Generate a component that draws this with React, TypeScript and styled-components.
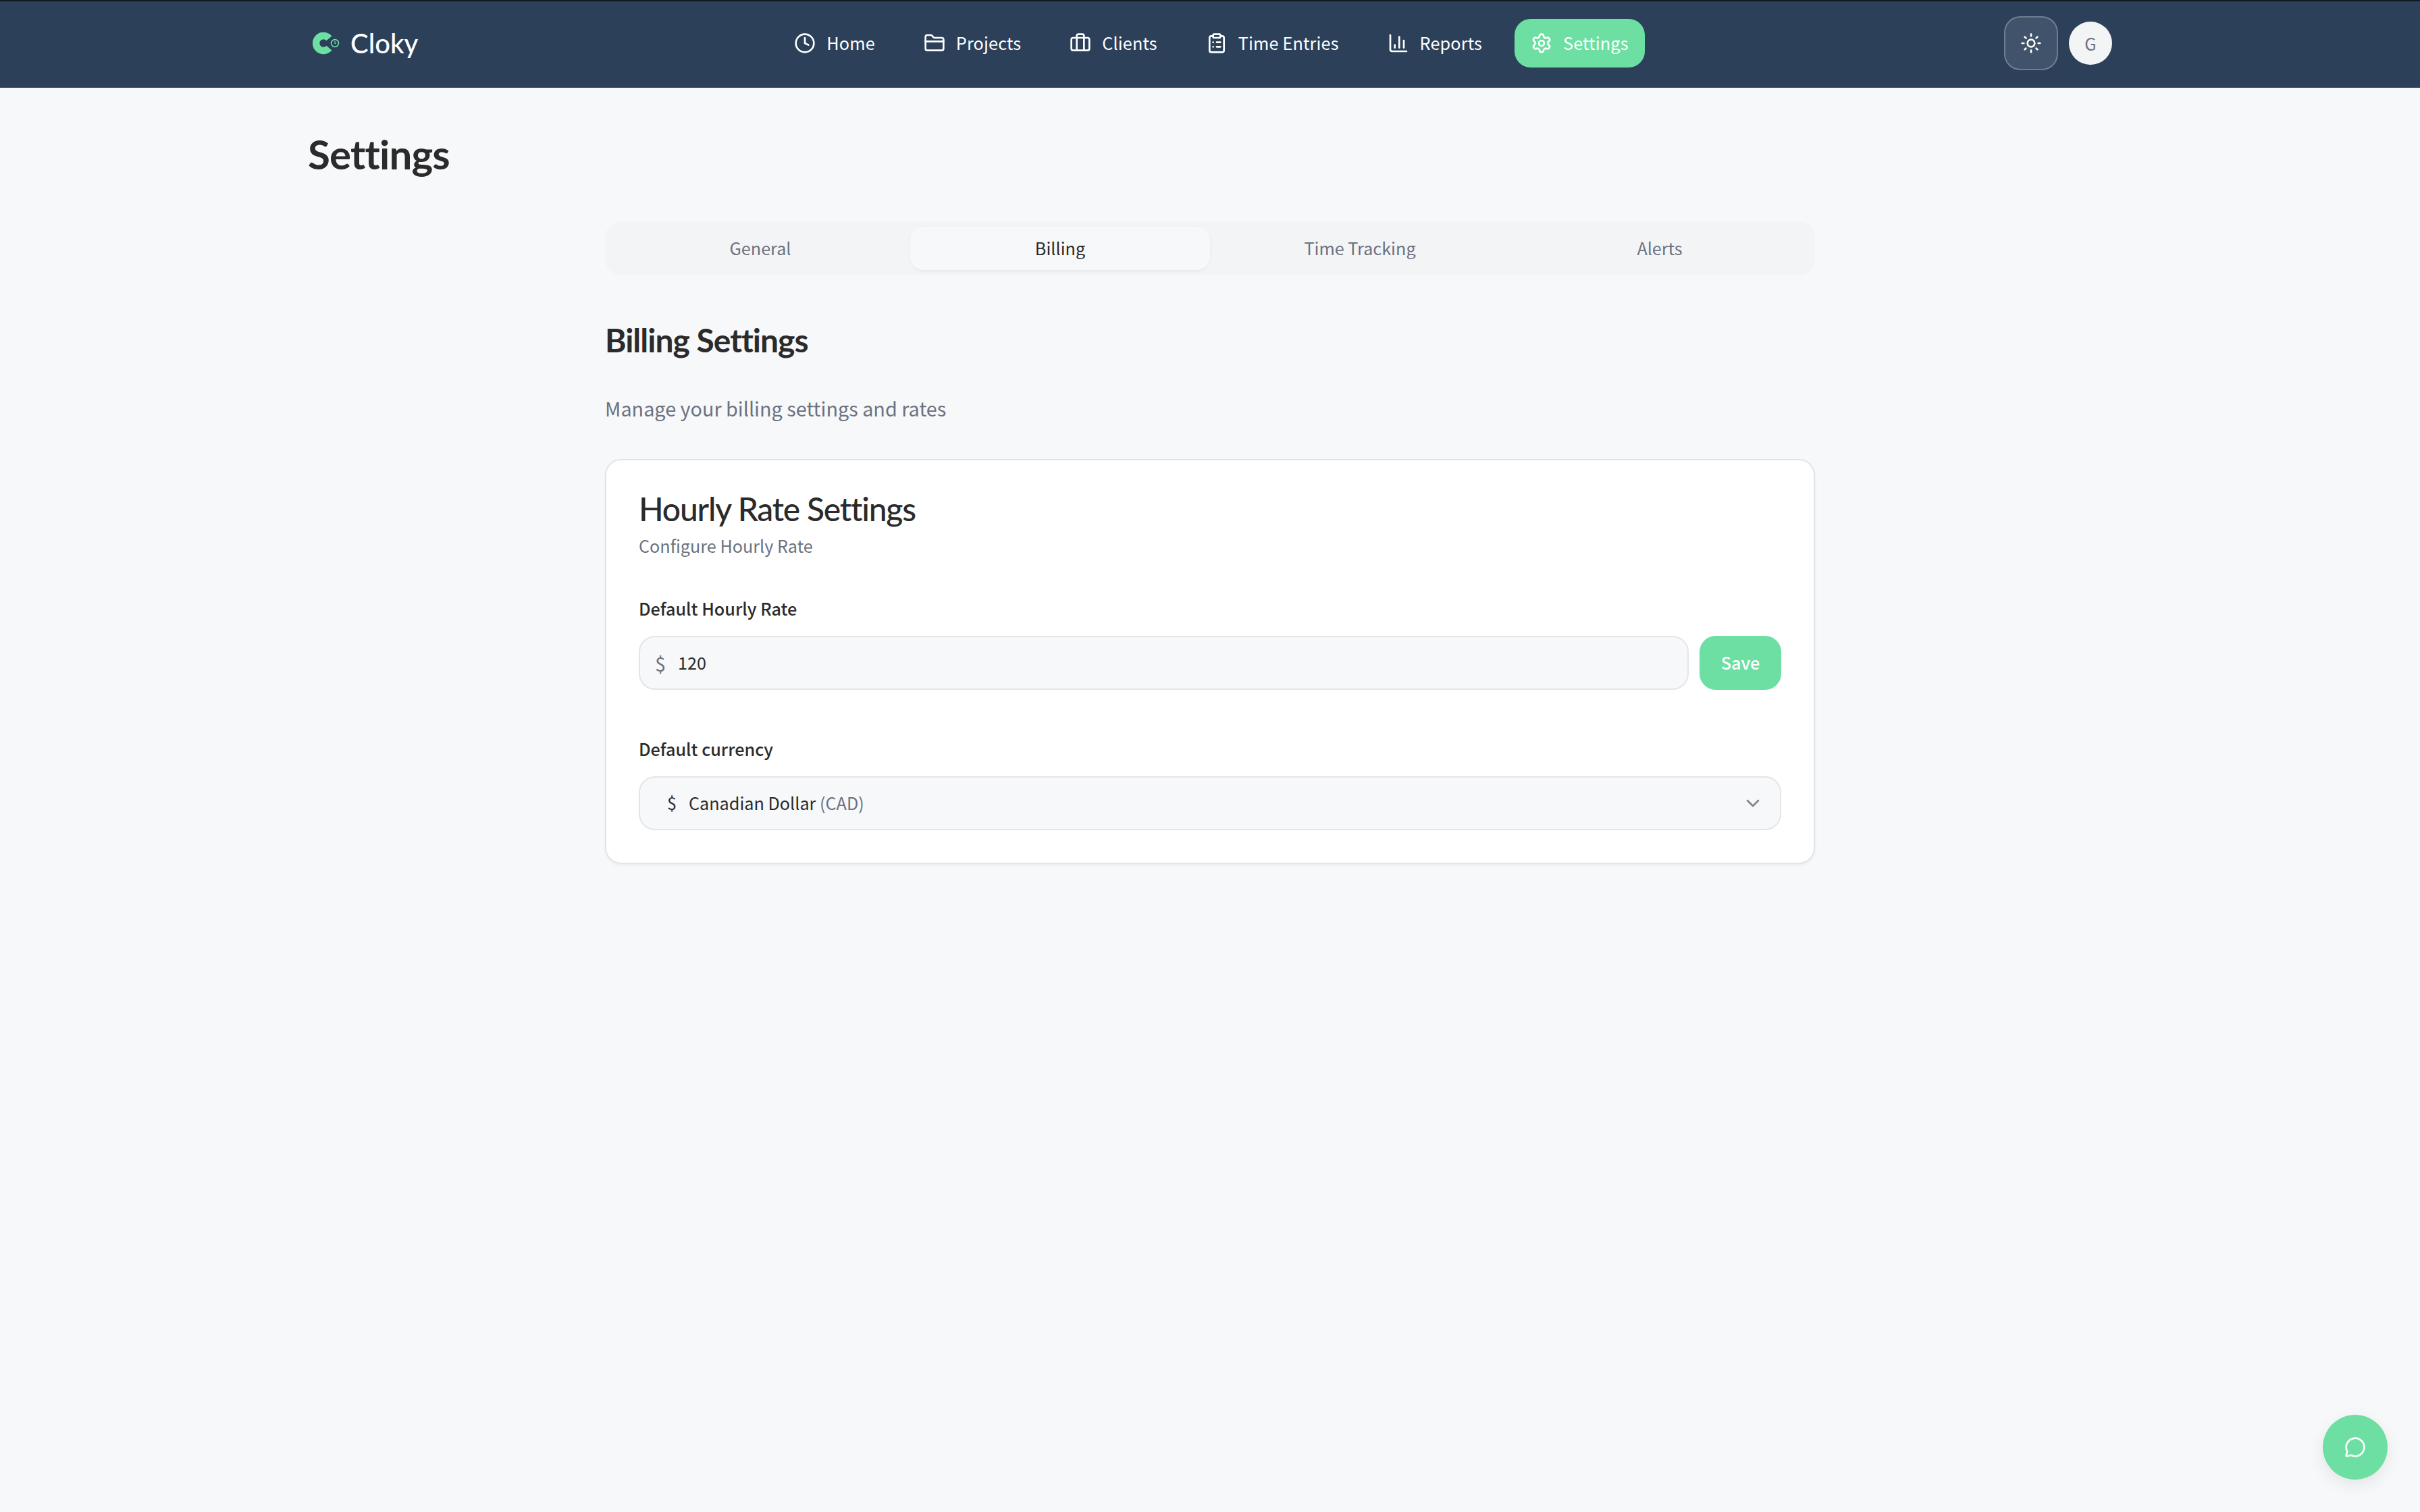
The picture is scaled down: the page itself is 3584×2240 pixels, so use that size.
import styled, { createGlobalStyle } from "styled-components"
import {
  Briefcase,
  ChartColumn,
  ChevronDown,
  ClipboardList,
  Clock,
  FolderClosed,
  MessageCircle,
  Settings,
  Sun,
} from "lucide-react"
import type { LucideIcon } from "lucide-react"

const BODY_FONT = `"Noto Sans CJK JP", "Noto Sans", sans-serif`
const HEAD_FONT = `Lato, "Open Sans", sans-serif`
const GREEN = "#6ddfa2"
const PAGE_BG = "#f7f8fa"

const GlobalStyle = createGlobalStyle`
  html, body {
    margin: 0;
    padding: 0;
    background: ${PAGE_BG};
  }
  * {
    box-sizing: border-box;
  }
`

const NAV_ITEMS: { label: string; icon: LucideIcon; active?: boolean }[] = [
  { label: "Home", icon: Clock },
  { label: "Projects", icon: FolderClosed },
  { label: "Clients", icon: Briefcase },
  { label: "Time Entries", icon: ClipboardList },
  { label: "Reports", icon: ChartColumn },
  { label: "Settings", icon: Settings, active: true },
]

const TABS = ["General", "Billing", "Time Tracking", "Alerts"]

function Logo() {
  return (
    <svg width="40" height="36" viewBox="0 0 40 36">
      <path
        d="M24.4 10.9A11 11 0 1 0 24.4 25.1"
        fill="none"
        stroke={GREEN}
        strokeWidth="10.5"
      />
      <circle cx="33" cy="18" r="5.4" fill="none" stroke={GREEN} strokeWidth="1.6" />
      <path d="M33 15v3.2l1.8 1" fill="none" stroke={GREEN} strokeWidth="1.2" />
    </svg>
  )
}

export default function App() {
  return (
    <Page>
      <GlobalStyle />
      <Header>
        <HeaderInner>
          <Brand>
            <Logo />
            <BrandName>Cloky</BrandName>
          </Brand>
          <Nav>
            {NAV_ITEMS.map(({ label, icon: Icon, active }) => (
              <NavItem key={label} $active={active}>
                <Icon size={32} strokeWidth={2} />
                <RaisedText>{label}</RaisedText>
              </NavItem>
            ))}
          </Nav>
          <HeaderActions>
            <ThemeButton>
              <Sun size={32} strokeWidth={2} />
            </ThemeButton>
            <Avatar>G</Avatar>
          </HeaderActions>
        </HeaderInner>
      </Header>

      <Main>
        <PageTitle>Settings</PageTitle>
        <Content>
          <Tabs>
            {TABS.map((tab) => (
              <Tab key={tab} $active={tab === "Billing"}>
                <RaisedText>{tab}</RaisedText>
              </Tab>
            ))}
          </Tabs>
          <SectionTitle>Billing Settings</SectionTitle>
          <SectionText>Manage your billing settings and rates</SectionText>
          <Card>
            <CardTitle>Hourly Rate Settings</CardTitle>
            <CardText>Configure Hourly Rate</CardText>
            <RateField>
              <Label>Default Hourly Rate</Label>
              <FieldRow>
                <RateInput>
                  <Dollar>$</Dollar>
                  <RaisedText>120</RaisedText>
                </RateInput>
                <SaveButton>
                  <RaisedText>Save</RaisedText>
                </SaveButton>
              </FieldRow>
            </RateField>
            <CurrencyField>
              <Label>Default currency</Label>
              <Select>
                <SelectValue>
                  <RaisedText>$</RaisedText>
                  <RaisedText>
                    Canadian Dollar <Code>(CAD)</Code>
                  </RaisedText>
                </SelectValue>
                <ChevronDown size={32} strokeWidth={2} color="#858585" />
              </Select>
            </CurrencyField>
          </Card>
        </Content>
      </Main>

      <ChatButton>
        <MessageCircle size={32} strokeWidth={2} />
      </ChatButton>
    </Page>
  )
}

const Page = styled.div`
  min-height: 2240px;
  background: ${PAGE_BG};
  font-family: ${BODY_FONT};
  color: #2b2b2b;
`
const Header = styled.header`
  height: 130px;
  background: #2c405a;
  box-shadow: inset 0 2px 0 #111820;
`
const HeaderInner = styled.div`
  max-width: 2736px;
  height: 128px;
  margin: 0 auto;
  padding: 0 32px;
  display: grid;
  grid-template-columns: 1fr auto 1fr;
  align-items: center;
`
const Brand = styled.div`
  display: flex;
  align-items: center;
  gap: 16px;
  padding-left: 7px;
`
const BrandName = styled.span`
  font-family: ${HEAD_FONT};
  font-size: 40px;
  font-weight: 500;
  color: #ffffff;
`
const Nav = styled.nav`
  display: flex;
  align-items: center;
  gap: 24px;
  padding-left: 4px;
`
const RaisedText = styled.span`
  display: block;
  padding-bottom: 3px;
`
const NavItem = styled.a<{ $active?: boolean }>`
  height: 72px;
  padding: 0 24px;
  display: flex;
  align-items: center;
  gap: 16px;
  border-radius: 24px;
  font-size: 25.2px;
  font-weight: 400;
  letter-spacing: 0.15px;
  color: #ffffff;
  background: ${(p) => (p.$active ? GREEN : "transparent")};
`
const HeaderActions = styled.div`
  display: flex;
  justify-content: flex-end;
  align-items: center;
  gap: 16px;
`
const ThemeButton = styled.button`
  width: 80px;
  height: 80px;
  display: flex;
  align-items: center;
  justify-content: center;
  padding: 0;
  border: 2px solid rgba(255, 255, 255, 0.25);
  border-radius: 24px;
  background: rgba(255, 255, 255, 0.1);
  color: #ffffff;
`
const Avatar = styled.div`
  width: 64px;
  height: 64px;
  display: flex;
  align-items: center;
  justify-content: center;
  border-radius: 50%;
  background: #f3f4f6;
  color: #6b7280;
  font-size: 25.2px;
`
const Main = styled.main`
  max-width: 2736px;
  margin: 0 auto;
  padding: 62px 32px 0;
`
const PageTitle = styled.h1`
  margin: 0;
  font-family: ${HEAD_FONT};
  font-size: 60px;
  line-height: 72px;
  font-weight: 700;
  letter-spacing: -0.8px;
  color: #2b2b2b;
`
const Content = styled.div`
  width: 1792px;
  margin: 64px auto 0;
`
const Tabs = styled.div`
  height: 80px;
  padding: 8px;
  display: grid;
  grid-template-columns: repeat(4, 1fr);
  border-radius: 24px;
  background: #f3f4f6;
`
const Tab = styled.div<{ $active?: boolean }>`
  display: flex;
  align-items: center;
  justify-content: center;
  border-radius: 20px;
  font-size: 25.2px;
  font-weight: 400;
  color: ${(p) => (p.$active ? "#2b2b2b" : "#6b7280")};
  background: ${(p) => (p.$active ? PAGE_BG : "transparent")};
  box-shadow: ${(p) => (p.$active ? "0 2px 4px rgba(0, 0, 0, 0.05)" : "none")};
`
const SectionTitle = styled.h2`
  margin: 68px 0 0;
  font-family: ${HEAD_FONT};
  font-size: 48px;
  line-height: 56px;
  font-weight: 700;
  letter-spacing: -1px;
  color: #2b2b2b;
`
const SectionText = styled.p`
  margin: 51px 0 0;
  font-size: 28.8px;
  line-height: 44px;
  color: #6b7280;
`
const Card = styled.section`
  margin-top: 53px;
  padding: 48px;
  border: 2px solid #e3e5e9;
  border-radius: 24px;
  background: #ffffff;
  box-shadow: 0 2px 4px rgba(0, 0, 0, 0.05);
`
const CardTitle = styled.h3`
  margin: 2px 0 0;
  font-family: ${HEAD_FONT};
  font-size: 48px;
  line-height: 44px;
  font-weight: 500;
  letter-spacing: -1.2px;
  color: #2b2b2b;
`
const CardText = styled.p`
  margin: 14px 0 0;
  font-size: 25.2px;
  line-height: 36px;
  color: #6b7280;
`
const RateField = styled.div`
  margin-top: 57px;
`
const CurrencyField = styled.div`
  margin-top: 69px;
`
const Label = styled.div`
  margin-bottom: 23px;
  font-size: 25.2px;
  line-height: 36px;
  font-weight: 500;
  color: #2b2b2b;
`
const FieldRow = styled.div`
  display: flex;
  gap: 16px;
`
const RateInput = styled.div`
  flex: 1;
  height: 80px;
  padding: 0 22px;
  display: flex;
  align-items: center;
  gap: 18px;
  border: 2px solid #e3e5e9;
  border-radius: 24px;
  background: ${PAGE_BG};
  font-size: 25.2px;
  color: #2b2b2b;
`
const Dollar = styled.span`
  font-size: 28.8px;
  color: #6b7280;
`
const SaveButton = styled.button`
  width: 121px;
  height: 80px;
  padding: 0;
  border: none;
  border-radius: 24px;
  background: ${GREEN};
  color: #ffffff;
  font-family: ${BODY_FONT};
  font-size: 25.2px;
  font-weight: 500;
`
const Select = styled.div`
  height: 80px;
  padding: 0 24px 0 40px;
  display: flex;
  align-items: center;
  justify-content: space-between;
  border: 2px solid #e3e5e9;
  border-radius: 24px;
  background: ${PAGE_BG};
  font-size: 25.2px;
`
const SelectValue = styled.div`
  display: flex;
  align-items: center;
  gap: 18px;
`
const Code = styled.span`
  color: #6b7280;
`
const ChatButton = styled.button`
  position: fixed;
  right: 48px;
  bottom: 48px;
  width: 96px;
  height: 96px;
  display: flex;
  align-items: center;
  justify-content: center;
  padding: 0;
  border: none;
  border-radius: 50%;
  background: ${GREEN};
  color: #ffffff;
  box-shadow: 0 8px 24px rgba(0, 0, 0, 0.08);
`
